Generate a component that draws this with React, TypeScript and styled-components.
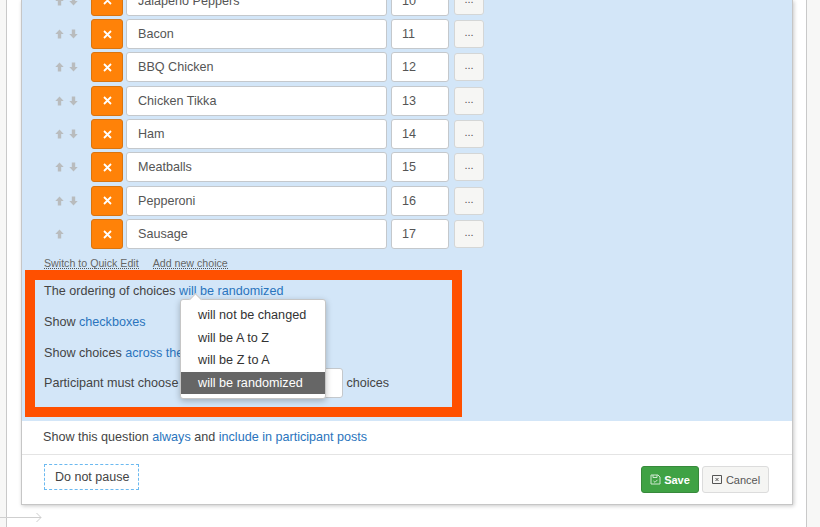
import { FC } from 'react';
import styled, { createGlobalStyle } from 'styled-components';

const GlobalStyle = createGlobalStyle`
  html, body {
    margin: 0;
    padding: 0;
    background: #fff;
    overflow: hidden;
  }
  body {
    font-family: "Liberation Sans", Arial, sans-serif;
  }
`;

const Page = styled.div`
  position: relative;
  display: flex;
  width: 820px;
  height: 527px;
  overflow: hidden;
`;

const Rail = styled.div<{ side: 'left' | 'right' }>`
  flex: none;
  box-sizing: border-box;
  width: ${props => props.side === 'left' ? '7px' : '14px'};
  background: #f7f7f6;
  border-${props => props.side === 'left' ? 'right' : 'left'}: 1px solid #c9c9c9;
`;

const Main = styled.div`
  flex: 1;
  min-width: 0;
  padding: 0 13px 0 14px;
`;

const Card = styled.div`
  box-sizing: border-box;
  height: 505px;
  display: flex;
  flex-direction: column;
  background: #fff;
  border: 1px solid #c6c6c6;
  border-top: 0;
  box-shadow: 1px 1px 4px rgba(0, 0, 0, 0.22);
`;

const Panel = styled.div`
  flex: none;
  height: 421px;
  padding-left: 3px;
  background: #d3e6f8;
  overflow: hidden;
`;

const ChoiceList = styled.div`
  display: flex;
  flex-direction: column;
  gap: 3.33px;
  margin-top: -14.25px;
  padding-left: 29px;
`;

const Row = styled.div`
  display: flex;
  align-items: stretch;
  height: 30px;
`;

const Arrows = styled.div`
  display: flex;
  align-items: center;
  gap: 5px;
  width: 37px;
  padding-left: 1px;
  box-sizing: border-box;
`;

const RemoveButton = styled.button`
  width: 32px;
  height: 30px;
  margin-right: 3px;
  padding: 0;
  display: flex;
  align-items: center;
  justify-content: center;
  background: #ff8208;
  border: 1px solid #d9740f;
  border-radius: 3px;
  color: #fff;
`;

const Field = styled.div<{ width: number; inset: number }>`
  box-sizing: border-box;
  width: ${props => props.width}px;
  height: 30px;
  margin-right: 4px;
  padding-left: ${props => props.inset}px;
  display: flex;
  align-items: center;
  background: #fff;
  border: 1px solid #c4c8cc;
  border-radius: 3px;
  font-size: 12.6px;
  color: #555;
`;

const MoreButton = styled.button`
  box-sizing: border-box;
  width: 30px;
  height: 28px;
  margin: 1px 0 0 1px;
  padding: 0 0 4px;
  background: #f6f6f4;
  border: 1px solid #d4d6d6;
  border-radius: 3px;
  font: 11px "Liberation Sans", Arial, sans-serif;
  color: #555;
`;

const EditLinks = styled.div`
  display: flex;
  gap: 14px;
  height: 15px;
  margin: 8.25px 0 0 19px;
  font-size: 10.65px;
  line-height: 13px;
`;

const DottedLink = styled.a`
  color: #666;
  border-bottom: 1px dotted #555;
  height: 11px;
`;

const Highlight = styled.div`
  position: relative;
  box-sizing: border-box;
  display: flex;
  flex-direction: column;
  gap: 8.67px;
  width: 437px;
  height: 147px;
  padding: 0 9px;
  border: 10px solid #ff5000;
  margin-top: -2px;
`;

const Setting = styled.div`
  display: flex;
  align-items: center;
  flex: none;
  height: 22px;
  font-size: 12.6px;
  color: #444;
  white-space: pre;
`;

const BlueLink = styled.a`
  color: #2a74bd;
`;

const CountInput = styled.div`
  box-sizing: border-box;
  flex: none;
  width: 44px;
  height: 30px;
  margin: 0 3px 0 121px;
  background: #fff;
  border: 1px solid #c4c8cc;
  border-radius: 3px;
`;

const Dropdown = styled.ul`
  position: absolute;
  left: 145px;
  top: 19px;
  box-sizing: border-box;
  width: 146px;
  height: 100px;
  margin: 0;
  padding: 4px 0 0;
  list-style: none;
  background: #fff;
  border: 1px solid #c6c6c6;
  border-radius: 3px;
  box-shadow: 0 2px 6px rgba(0, 0, 0, 0.25);

  &::before {
    content: '';
    position: absolute;
    left: 10px;
    top: -5px;
    width: 8px;
    height: 8px;
    background: #fff;
    border-top: 1px solid #c6c6c6;
    border-left: 1px solid #c6c6c6;
    transform: rotate(45deg);
  }
`;

const Option = styled.li<{ active?: boolean }>`
  height: 22.5px;
  padding-left: 17px;
  line-height: 22px;
  font-size: 12.65px;
  color: ${props => props.active ? '#fff' : '#333'};
  background: ${props => props.active ? '#666' : 'transparent'};
`;

const VisibilityRow = styled.div`
  flex: none;
  height: 34px;
  box-sizing: border-box;
  padding: 9px 0 0 21px;
  font-size: 12.6px;
  line-height: 14px;
  color: #444;
  border-bottom: 1px solid #e4e4e4;
  white-space: pre;
`;

const Footer = styled.div`
  flex: 1;
  display: flex;
  justify-content: space-between;
  padding: 9px 23px 0 22px;
`;

const PauseBox = styled.div`
  box-sizing: border-box;
  width: 95px;
  height: 26px;
  padding-left: 10px;
  line-height: 24px;
  font-size: 12.5px;
  color: #444;
  border: 1px dashed #6bb9f0;
`;

const FooterButtons = styled.div`
  display: flex;
  gap: 3px;
  margin-top: 2px;
`;

const ActionButton = styled.button<{ primary?: boolean }>`
  box-sizing: border-box;
  height: 27px;
  width: ${props => props.primary ? '58px' : '67px'};
  padding: 0;
  display: flex;
  align-items: center;
  justify-content: center;
  gap: 3px;
  font: ${props => props.primary ? 'bold' : 'normal'} 11px "Liberation Sans", Arial, sans-serif;
  color: ${props => props.primary ? '#fff' : '#555'};
  background: ${props => props.primary ? '#3fa244' : '#f5f5f3'};
  border: 1px solid ${props => props.primary ? '#37893b' : '#dcdcdc'};
  border-radius: 3px;
`;

const Connector = styled.svg`
  position: absolute;
  left: 0;
  top: 511px;
`;

const UpArrow: FC = () => (
  <svg width="9" height="10" viewBox="0 0 9 10" fill="#b9bcbe">
    <path d="M4.5 0.5 L8.7 5 H6.2 V9.5 H2.8 V5 H0.3 Z" />
  </svg>
);

const DownArrow: FC = () => (
  <svg width="9" height="10" viewBox="0 0 9 10" fill="#b9bcbe">
    <path d="M4.5 9.5 L8.7 5 H6.2 V0.5 H2.8 V5 H0.3 Z" />
  </svg>
);

const choices = [
  ['Jalapeno Peppers', '10'],
  ['Bacon', '11'],
  ['BBQ Chicken', '12'],
  ['Chicken Tikka', '13'],
  ['Ham', '14'],
  ['Meatballs', '15'],
  ['Pepperoni', '16'],
  ['Sausage', '17'],
];

const App: FC = () => {
  return (
    <Page>
      <GlobalStyle />
      <Rail side="left" />
      <Main>
        <Card>
          <Panel>
            <ChoiceList>
              {choices.map(([name, order], i) => (
                <Row key={order}>
                  <Arrows>
                    <UpArrow />
                    {i < choices.length - 1 && <DownArrow />}
                  </Arrows>
                  <RemoveButton type="button">
                    <svg width="9" height="9" viewBox="0 0 9 9" stroke="#fff" strokeWidth="1.8">
                      <path d="M1 1 L8 8 M8 1 L1 8" />
                    </svg>
                  </RemoveButton>
                  <Field width={261} inset={11}>{name}</Field>
                  <Field width={58} inset={10}>{order}</Field>
                  <MoreButton type="button">...</MoreButton>
                </Row>
              ))}
            </ChoiceList>
            <EditLinks>
              <DottedLink>Switch to Quick Edit</DottedLink>
              <DottedLink>Add new choice</DottedLink>
            </EditLinks>
            <Highlight>
              <Setting>
                The ordering of choices <BlueLink>will be randomized</BlueLink>
              </Setting>
              <Setting>
                Show <BlueLink>checkboxes</BlueLink>
              </Setting>
              <Setting>
                Show choices <BlueLink>across the page</BlueLink>
              </Setting>
              <Setting>
                Participant must choose
                <CountInput />
                choices
              </Setting>
              <Dropdown>
                <Option>will not be changed</Option>
                <Option>will be A to Z</Option>
                <Option>will be Z to A</Option>
                <Option active>will be randomized</Option>
              </Dropdown>
            </Highlight>
          </Panel>
          <VisibilityRow>
            Show this question <BlueLink>always</BlueLink> and <BlueLink>include in participant posts</BlueLink>
          </VisibilityRow>
          <Footer>
            <PauseBox>Do not pause</PauseBox>
            <FooterButtons>
              <ActionButton type="button" primary>
                <svg width="11" height="11" viewBox="0 0 11 11" fill="none" stroke="#cfe8d0" strokeWidth="1">
                  <path d="M1 1 H8 L10 3 V10 H1 Z M3 1 V3.5 H7 V1 M3.5 7 L5 8.3 L7.5 5.8" />
                </svg>
                Save
              </ActionButton>
              <ActionButton type="button">
                <svg width="12" height="11" viewBox="0 0 12 11" fill="none" stroke="#555" strokeWidth="1">
                  <path d="M1.5 1.5 H10.5 V9.5 H1.5 Z M4.5 4 L7.5 7 M7.5 4 L4.5 7" />
                </svg>
                Cancel
              </ActionButton>
            </FooterButtons>
          </Footer>
        </Card>
      </Main>
      <Rail side="right" />
      <Connector width="44" height="12" viewBox="0 0 44 12" fill="none" stroke="#cfcfcf" strokeWidth="1">
        <path d="M0 6.5 H41 M36.5 2 L41 6.5 L36.5 11" />
      </Connector>
    </Page>
  );
};

export default App;
